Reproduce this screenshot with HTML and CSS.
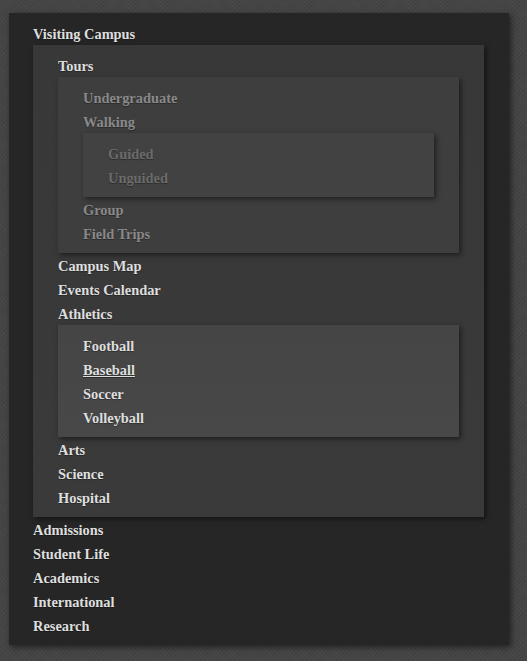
FILE: index.html
```html
<!DOCTYPE html>
<html>
<head>
<meta charset="utf-8">
<link rel="stylesheet" href="styles.css">
</head>
<body>
<nav class="menu">
  <ul class="lvl0">
    <li><a href="#">Visiting Campus</a>
      <ul class="lvl1">
        <li><a href="#">Tours</a>
          <ul class="lvl2 dim">
            <li><a href="#">Undergraduate</a></li>
            <li><a href="#">Walking</a>
              <ul class="lvl3 dimmer">
                <li><a href="#">Guided</a></li>
                <li><a href="#">Unguided</a></li>
              </ul>
            </li>
            <li><a href="#">Group</a></li>
            <li><a href="#">Field Trips</a></li>
          </ul>
        </li>
        <li><a href="#">Campus Map</a></li>
        <li><a href="#">Events Calendar</a></li>
        <li><a href="#">Athletics</a>
          <ul class="lvl2 bright">
            <li><a href="#">Football</a></li>
            <li><a href="#" class="hover">Baseball</a></li>
            <li><a href="#">Soccer</a></li>
            <li><a href="#">Volleyball</a></li>
          </ul>
        </li>
        <li><a href="#">Arts</a></li>
        <li><a href="#">Science</a></li>
        <li><a href="#">Hospital</a></li>
      </ul>
    </li>
    <li><a href="#">Admissions</a></li>
    <li><a href="#">Student Life</a></li>
    <li><a href="#">Academics</a></li>
    <li><a href="#">International</a></li>
    <li><a href="#">Research</a></li>
  </ul>
</nav>
</body>
</html>
```

FILE: styles.css
```css
html, body {
  margin: 0;
  padding: 0;
}
body {
  background-color: #454545;
  background-image:
    repeating-linear-gradient(45deg, rgba(255,255,255,0.025) 0 1px, transparent 1px 3px),
    repeating-linear-gradient(-45deg, rgba(0,0,0,0.05) 0 1px, transparent 1px 3px);
  width: 527px;
  height: 661px;
  overflow: hidden;
  padding: 13px 0 0 9px;
  box-sizing: border-box;
  font-family: "Liberation Serif", "Times New Roman", serif;
  font-weight: bold;
  font-size: 14.4px;
}
.menu {
  width: 500px;
  background: #262626;
  box-shadow: 2px 2px 6px rgba(0,0,0,0.55);
  padding: 8px 25px 8px 24px;
  box-sizing: border-box;
}
ul {
  list-style: none;
  margin: 0;
  padding: 0;
}
li {
  display: block;
}
a {
  display: block;
  height: 23px;
  padding-top: 1px;
  line-height: 24px;
  color: #dedede;
  text-decoration: none;
  text-shadow: 0 1px 1px rgba(0,0,0,0.35);
}
.lvl1, .lvl2, .lvl3 {
  padding: 8px 25px;
  box-shadow: 2px 2px 5px rgba(0,0,0,0.5);
}
.lvl1 {
  background: linear-gradient(#383838, #3a3a3a);
}
.lvl2.dim {
  background: #3e3e3e;
}
.lvl2.dim a {
  color: #898989;
}
.lvl3.dimmer {
  background: #424242;
}
.lvl3.dimmer a {
  color: #6b6b6b;
}
.lvl2.bright {
  background: linear-gradient(#454545, #484848);
}
.lvl2.bright a {
  color: #dedede;
}
a.hover {
  text-decoration: underline;
}
```
